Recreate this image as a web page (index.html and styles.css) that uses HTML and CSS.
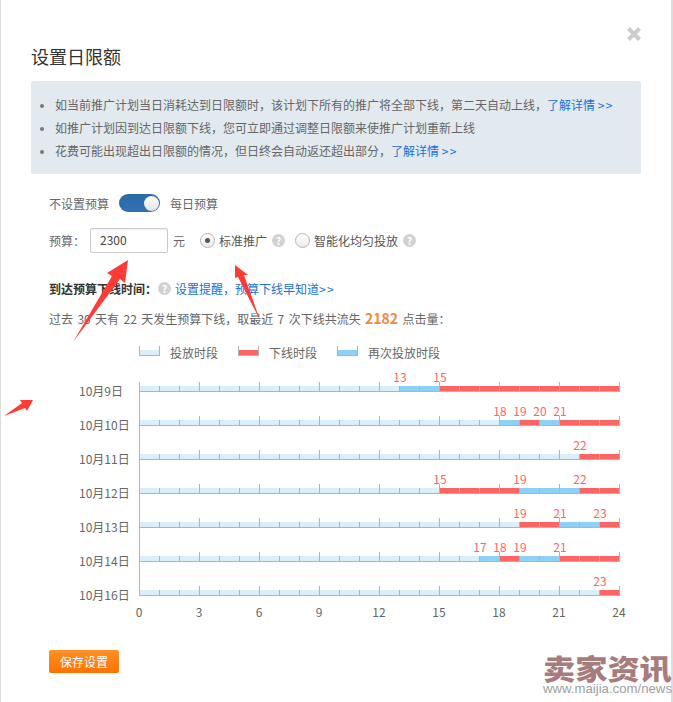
FILE: index.html
```html
<!DOCTYPE html>
<html lang="zh-CN">
<head>
    <meta charset="UTF-8">
    <title>设置日限额</title>
    <link rel="stylesheet" href="styles.css">
</head>
<body>
    <div class="dialog">
        <svg class="close-icon" width="14" height="14" viewBox="0 0 14 14"><path d="M1.5 1.5 L12.5 12.5 M12.5 1.5 L1.5 12.5"/></svg>
        <h1 class="dialog-title">设置日限额</h1>

        <!-- Notice -->
        <ul class="notice">
            <li>如当前推广计划当日消耗达到日限额时，该计划下所有的推广将全部下线，第二天自动上线，<a class="link">了解详情 <span class="more">&gt;&gt;</span></a></li>
            <li>如推广计划因到达日限额下线，您可立即通过调整日限额来使推广计划重新上线</li>
            <li>花费可能出现超出日限额的情况，但日终会自动返还超出部分，<a class="link">了解详情 <span class="more">&gt;&gt;</span></a></li>
        </ul>

        <div class="form">
            <div class="switch-row">
                <span>不设置预算</span>
                <span class="toggle"><span class="toggle-knob"></span></span>
                <span>每日预算</span>
            </div>

            <div class="budget-row">
                <span>预算：</span>
                <span class="budget-input">2300</span>
                <span class="unit">元</span>
                <span class="radio radio-checked"></span>
                <span class="radio-label">标准推广</span>
                <span class="help">?</span>
                <span class="radio radio-second"></span>
                <span class="radio-label">智能化均匀投放</span>
                <span class="help">?</span>
            </div>

            <div class="offline-row">
                <strong>到达预算下线时间：</strong>
                <span class="help">?</span>
                <a class="link">设置提醒，预算下线早知道<span class="more">&gt;&gt;</span></a>
            </div>

            <div class="summary-row">过去 30 天有 22 天发生预算下线，取最近 7 次下线共流失 <b class="lost">2182</b> 点击量：</div>

            <div class="legend">
                <span class="swatch"><i class="seg on"></i></span><span class="legend-text">投放时段</span>
                <span class="swatch"><i class="seg off"></i></span><span class="legend-text">下线时段</span>
                <span class="swatch"><i class="seg again"></i></span><span class="legend-text">再次投放时段</span>
            </div>

            <!-- Chart: 20px = 1 hour -->
            <div class="chart">
                <div class="chart-row">
                    <span class="day">10月9日</span>
                    <div class="track">
                        <div class="bar"><i class="seg on" style="width:260px"></i><i class="seg again" style="width:40px"></i><i class="seg off" style="width:180px"></i></div>
                        <span class="hour" style="left:260px">13</span><span class="hour" style="left:300px">15</span>
                    </div>
                </div>
                <div class="chart-row">
                    <span class="day">10月10日</span>
                    <div class="track">
                        <div class="bar"><i class="seg on" style="width:360px"></i><i class="seg again" style="width:20px"></i><i class="seg off" style="width:20px"></i><i class="seg again" style="width:20px"></i><i class="seg off" style="width:60px"></i></div>
                        <span class="hour" style="left:360px">18</span><span class="hour" style="left:380px">19</span><span class="hour" style="left:400px">20</span><span class="hour" style="left:420px">21</span>
                    </div>
                </div>
                <div class="chart-row">
                    <span class="day">10月11日</span>
                    <div class="track">
                        <div class="bar"><i class="seg on" style="width:440px"></i><i class="seg off" style="width:40px"></i></div>
                        <span class="hour" style="left:440px">22</span>
                    </div>
                </div>
                <div class="chart-row">
                    <span class="day">10月12日</span>
                    <div class="track">
                        <div class="bar"><i class="seg on" style="width:300px"></i><i class="seg off" style="width:80px"></i><i class="seg again" style="width:60px"></i><i class="seg off" style="width:40px"></i></div>
                        <span class="hour" style="left:300px">15</span><span class="hour" style="left:380px">19</span><span class="hour" style="left:440px">22</span>
                    </div>
                </div>
                <div class="chart-row">
                    <span class="day">10月13日</span>
                    <div class="track">
                        <div class="bar"><i class="seg on" style="width:380px"></i><i class="seg off" style="width:40px"></i><i class="seg again" style="width:40px"></i><i class="seg off" style="width:20px"></i></div>
                        <span class="hour" style="left:380px">19</span><span class="hour" style="left:420px">21</span><span class="hour" style="left:460px">23</span>
                    </div>
                </div>
                <div class="chart-row">
                    <span class="day">10月14日</span>
                    <div class="track">
                        <div class="bar"><i class="seg on" style="width:340px"></i><i class="seg again" style="width:20px"></i><i class="seg off" style="width:20px"></i><i class="seg again" style="width:40px"></i><i class="seg off" style="width:60px"></i></div>
                        <span class="hour" style="left:340px">17</span><span class="hour" style="left:360px">18</span><span class="hour" style="left:380px">19</span><span class="hour" style="left:420px">21</span>
                    </div>
                </div>
                <div class="chart-row">
                    <span class="day">10月16日</span>
                    <div class="track">
                        <div class="bar"><i class="seg on" style="width:460px"></i><i class="seg off" style="width:20px"></i></div>
                        <span class="hour" style="left:460px">23</span>
                    </div>
                </div>
                <div class="x-axis">
                    <span>0</span><span>3</span><span>6</span><span>9</span><span>12</span><span>15</span><span>18</span><span>21</span><span>24</span>
                </div>
            </div>

            <button class="save-button">保存设置</button>
        </div>

        <!-- Red arrows drawn over the page -->
        <svg class="arrows" width="673" height="702" viewBox="0 0 673 702">
            <polygon points="128,260 107,273 112,276 73,342 120,279 125,283"/>
            <polygon points="235,265 235,278 238,277 260,320 244,275 248,275"/>
            <polygon points="33,400 20,400 22,403 4,416 25,408 27,411"/>
        </svg>

        <div class="watermark">
            <div class="watermark-name">卖家资讯</div>
            <div class="watermark-url">www.maijia.com/news</div>
        </div>
    </div>
</body>
</html>
```
FILE: styles.css
```css
html {
    overflow: hidden;
}

body {
    margin: 0;
    font-family: "Noto Sans CJK SC", "Liberation Sans", sans-serif;
    font-size: 12px;
    color: #666;
    background: #fff;
    height: 702px;
    overflow: hidden;
}

.dialog {
    position: relative;
    box-sizing: border-box;
    width: 673px;
    height: 702px;
    padding: 41px 30px 0;
    border-left: 1px solid #ddd;
    border-right: 2px solid #ddd;
}

.close-icon {
    position: absolute;
    top: 27px;
    left: 626px;
}

.close-icon path {
    fill: none;
    stroke: #ccc;
    stroke-width: 4;
}

.dialog-title {
    margin: 0;
    font-size: 18px;
    font-weight: normal;
    line-height: 30px;
    color: #333;
}

.notice {
    margin: 10px 0 0;
    padding: 12px 12px 12px 24px;
    background: #e2eaf0;
    border-radius: 2px;
    line-height: 23px;
}

.notice li::marker {
    font-size: 11px;
    color: #777;
}

.link {
    color: #1a6fd8;
}

.more {
    letter-spacing: 1.3px;
}

/* Form */
.form {
    padding-left: 18px;
}

.switch-row {
    display: flex;
    align-items: center;
    gap: 10px;
    height: 18px;
    margin-top: 20px;
}

.toggle {
    display: flex;
    justify-content: flex-end;
    align-items: center;
    box-sizing: border-box;
    width: 41px;
    height: 18px;
    padding-right: 1px;
    border-radius: 9px;
    background: linear-gradient(to bottom, #2a6aa8, #2f72b2);
}

.toggle-knob {
    width: 15px;
    height: 15px;
    border-radius: 50%;
    background: linear-gradient(to bottom, #fff, #e4e4e4);
}

.budget-row {
    display: flex;
    align-items: center;
    height: 25px;
    margin-top: 16px;
}

.budget-input {
    box-sizing: border-box;
    width: 78px;
    height: 25px;
    margin-left: 5px;
    padding-left: 9px;
    border: 1px solid #ccc;
    border-radius: 2px;
    box-shadow: inset 0 1px 2px rgba(0, 0, 0, 0.08);
    line-height: 21px;
    color: #444;
}

.unit {
    margin-left: 5px;
}

.radio {
    position: relative;
    box-sizing: border-box;
    width: 15px;
    height: 15px;
    margin-left: 15px;
    border: 1px solid #b4b4b4;
    border-radius: 50%;
    background: linear-gradient(to bottom, #fff, #ececec);
}

.radio-checked::after {
    content: "";
    position: absolute;
    top: 4px;
    left: 4px;
    width: 5px;
    height: 5px;
    border-radius: 50%;
    background: #555;
}

.radio-second {
    margin-left: 10px;
}

.radio-label {
    margin-left: 4px;
    color: #555;
}

.help {
    display: inline-block;
    flex: none;
    width: 13px;
    height: 13px;
    margin-left: 5px;
    border-radius: 50%;
    background: #d2d2d2;
    color: #fff;
    font-size: 10px;
    font-weight: bold;
    line-height: 13px;
    text-align: center;
}

.offline-row {
    display: flex;
    align-items: center;
    height: 20px;
    margin-top: 25px;
}

.offline-row strong {
    color: #333;
}

.offline-row .help {
    margin-left: 1px;
    margin-right: 4px;
}

.summary-row {
    height: 20px;
    margin-top: 10px;
    line-height: 20px;
    word-spacing: 1.7px;
}

.lost {
    font-size: 14px;
    color: #f08a3c;
}

.legend {
    display: flex;
    align-items: center;
    height: 20px;
    margin: 14px 0 0 90px;
}

.swatch {
    display: flex;
    align-items: flex-end;
    box-sizing: border-box;
    width: 21px;
    height: 10px;
    margin-top: -2px;
    border: solid #b3b3b3;
    border-width: 0 1px 1px;
}

.swatch .seg {
    width: 100%;
}

.legend-text {
    margin: 0 20px 0 10px;
}

/* Chart */
.chart {
    margin: 19px 0 0 30px;
}

.chart-row {
    display: flex;
    align-items: flex-end;
}

.day {
    width: 60px;
    margin-bottom: -9px;
    line-height: 20px;
}

.track {
    position: relative;
    box-sizing: border-box;
    width: 481px;
    height: 34px;
    border-bottom: 1px solid #b3b3b3;
    border-left: 1px solid #b3b3b3;
}

.chart-row:first-child .track {
    height: 10px;
}

/* ticks: short every hour, tall every 3 hours */
.track::after {
    content: "";
    position: absolute;
    left: -1px;
    bottom: 0;
    width: 481px;
    height: 9px;
    background-image:
        linear-gradient(to right, #b3b3b3 1px, transparent 1px),
        linear-gradient(to right, #b3b3b3 1px, transparent 1px);
    background-size: 60px 9px, 20px 5px;
    background-position: 0 100%, 0 100%;
    background-repeat: repeat-x;
}

.bar {
    position: absolute;
    left: 0;
    bottom: 0;
    display: flex;
    height: 5px;
}

.seg {
    display: block;
    height: 5px;
}

.seg.on {
    background: #daeefb;
}

.seg.off {
    background: #ff6464;
}

.seg.again {
    background: #8fd0f8;
}

.hour {
    position: absolute;
    bottom: 4px;
    transform: translateX(-50%);
    line-height: 20px;
    color: #ff6464;
}

.x-axis {
    display: flex;
    margin: 6px 0 0 30px;
}

.x-axis span {
    flex: none;
    width: 60px;
    line-height: 20px;
    text-align: center;
}

.save-button {
    display: block;
    width: 70px;
    height: 23px;
    margin-top: 28px;
    padding: 0;
    border: 0;
    border-radius: 2px;
    background: linear-gradient(to bottom, #ff9126, #ff7200);
    color: #fff;
    font-family: inherit;
    font-size: 12px;
}

.arrows {
    position: absolute;
    top: 0;
    left: -1px;
    pointer-events: none;
}

.arrows polygon {
    fill: #ff3b36;
}

.watermark {
    position: absolute;
    top: 655px;
    left: 542px;
    width: 130px;
}

.watermark-name {
    font-size: 28px;
    font-weight: 900;
    line-height: 27px;
    white-space: nowrap;
    color: #a67c7c;
    transform: scaleX(1.15);
    transform-origin: left center;
}

.watermark-url {
    font-family: "Liberation Sans", sans-serif;
    font-size: 13.2px;
    line-height: 14px;
    white-space: nowrap;
    color: #a0a0a0;
}
```
